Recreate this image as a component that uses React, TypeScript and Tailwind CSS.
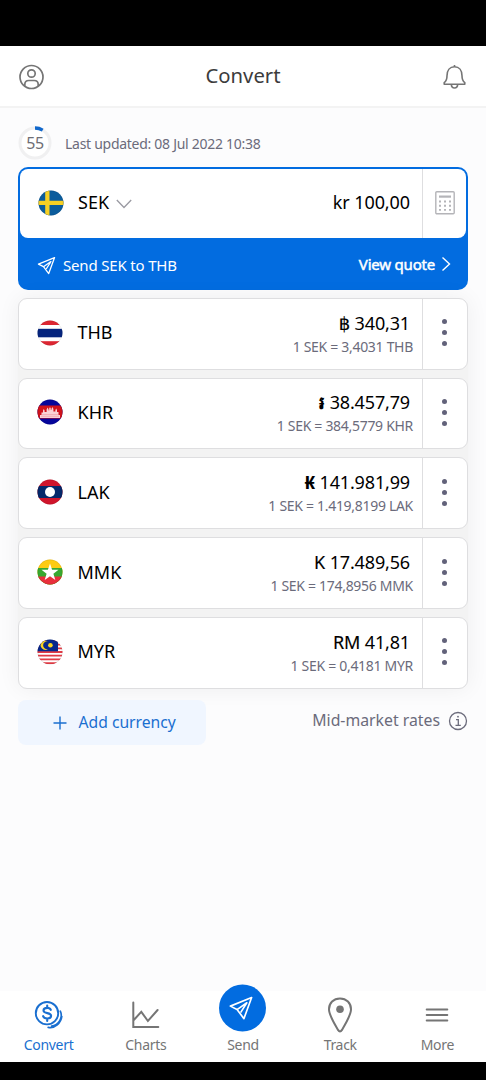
import type { ReactNode } from 'react'

interface Currency {
  code: string
  symbol: string
  boldSymbol?: boolean
  amount: string
  rate: string
  flag: ReactNode
}

function Flag({ id, children }: { id: string; children: ReactNode }) {
  return (
    <svg viewBox="0 0 26 26" className="size-[26px] shrink-0">
      <clipPath id={`flag-${id}`}>
        <circle cx="13" cy="13" r="12.5" />
      </clipPath>
      <g clipPath={`url(#flag-${id})`}>{children}</g>
      <circle cx="13" cy="13" r="12.3" fill="none" stroke="#000" strokeOpacity="0.15" strokeWidth="0.5" />
    </svg>
  )
}

const SEK_FLAG = (
  <Flag id="sek">
    <rect width="26" height="26" fill="#0b5c9c" />
    <path d="M7.2 0h4.3v26H7.2zM0 10.8h26v4.2H0z" fill="#f7d024" />
  </Flag>
)

const CURRENCIES: Currency[] = [
  {
    code: 'THB',
    symbol: '฿',
    amount: '340,31',
    rate: '1 SEK = 3,4031 THB',
    flag: (
      <Flag id="thb">
        <rect width="26" height="26" fill="#fff" />
        <rect width="26" height="5" fill="#dc2631" />
        <rect y="8.8" width="26" height="8.5" fill="#05247d" />
        <rect y="21.2" width="26" height="5" fill="#dc2631" />
      </Flag>
    ),
  },
  {
    code: 'KHR',
    symbol: '៛',
    boldSymbol: true,
    amount: '38.457,79',
    rate: '1 SEK = 384,5779 KHR',
    flag: (
      <Flag id="khr">
        <rect width="26" height="26" fill="#06069b" />
        <rect y="6.5" width="26" height="13" fill="#d1121b" />
        <path
          d="M3 19v-3h1.500v-2.500h1.500v-2l.8-1.500.8 1.500v1.500h2v-2.500l1-2 1 2v1h.6V9.500l.8-1.500.8 1.500V11h.6v-1l1-2 1 2v2.500h2v-1.500l.8-1.500.8 1.500v2h1.500V16H23v3z"
          fill="#fbd3d6"
        />
        <path d="M4 17.300h18M5 15.500h16" stroke="#ec8e96" strokeWidth="0.5" />
      </Flag>
    ),
  },
  {
    code: 'LAK',
    symbol: '₭',
    boldSymbol: true,
    amount: '141.981,99',
    rate: '1 SEK = 1.419,8199 LAK',
    flag: (
      <Flag id="lak">
        <rect width="26" height="26" fill="#cf142b" />
        <rect y="7" width="26" height="12" fill="#04286a" />
        <circle cx="13" cy="13" r="5" fill="#fff" />
      </Flag>
    ),
  },
  {
    code: 'MMK',
    symbol: 'K',
    amount: '17.489,56',
    rate: '1 SEK = 174,8956 MMK',
    flag: (
      <Flag id="mmk">
        <rect width="26" height="26" fill="#fdcb12" />
        <rect y="9" width="26" height="17" fill="#38a830" />
        <rect y="17.5" width="26" height="9" fill="#e92f3c" />
        <path
          d="M13 4.6l2.1 6.1 6.4.1-5.1 3.9 1.9 6.2-5.3-3.7-5.3 3.7 1.9-6.2-5.1-3.9 6.4-.1z"
          fill="#fff"
        />
      </Flag>
    ),
  },
  {
    code: 'MYR',
    symbol: 'RM',
    amount: '41,81',
    rate: '1 SEK = 0,4181 MYR',
    flag: (
      <Flag id="myr">
        <rect width="26" height="26" fill="#fff" />
        <path
          d="M0 1.9h26M0 5.6h26M0 9.3h26M0 13h26M0 16.7h26M0 20.4h26M0 24.1h26"
          stroke="#e23b45"
          strokeWidth="1.8"
        />
        <rect width="21" height="12.3" fill="#06288c" />
        <path d="M10.9 2.4a4.600 4.600 0 1 0 0 7.600 3.900 3.900 0 1 1 0-7.600z" fill="#f8d422" />
        <circle cx="13.400" cy="6.200" r="2.300" fill="#f8d422" />
      </Flag>
    ),
  },
]

function PlaneIcon({ className }: { className: string }) {
  return (
    <svg viewBox="0 0 24 24" fill="none" stroke="currentColor" strokeLinejoin="round" className={className}>
      <path d="M22.2 2L1.8 10.2l6.400 3.300 6.600 8.700z" />
      <path d="M8.200 13.500L17.600 7l-6 9.400" />
    </svg>
  )
}

function CurrencyRow({ currency }: { currency: Currency }) {
  return (
    <div className="flex h-[71.8px] rounded-[9px] border border-[#dedee0] bg-white">
      <div className="flex flex-1 items-center pl-[18.5px]">
        <div className="-ml-[0.5px] pb-[2px]">{currency.flag}</div>
        <span className="ml-[14.500px] pb-[2px] text-[18px] text-black">{currency.code}</span>
        <div className="ml-auto flex flex-col items-end pr-[9px] pt-px">
          <p className="pr-[3px] text-[18px] leading-[25px] tracking-[-0.15px] text-black">
            <span className={currency.boldSymbol ? 'font-bold' : '[-webkit-text-stroke:0.15px_black]'}>
              {currency.symbol}
            </span>{' '}
            {currency.amount}
          </p>
          <p className="text-[14px] leading-[22px] tracking-[-0.3px] text-[#6b6b7b]">{currency.rate}</p>
        </div>
      </div>
      <button className="flex w-[45px] flex-col items-center justify-center gap-[6px] border-l border-[#dedee0] pr-[1.500px] pb-[2px]">
        <span className="size-[5px] rounded-full bg-[#62627a]" />
        <span className="size-[5px] rounded-full bg-[#62627a]" />
        <span className="size-[5px] rounded-full bg-[#62627a]" />
      </button>
    </div>
  )
}

const NAV_ITEMS = [
  {
    label: 'Convert',
    active: true,
    icon: (
      <svg viewBox="0 0 30 30" fill="none" stroke="currentColor" className="size-[30px]">
        <circle cx="13" cy="13.2" r="11.2" strokeWidth="1.9" />
        <path
          d="M16.8 9.8c-.5-1.2-1.800-1.900-3.600-1.900-2.200 0-3.700 1-3.700 2.600 0 3.800 7.600 1.500 7.600 5.300 0 1.700-1.600 2.700-3.900 2.700-2 0-3.600-.8-4.100-2.300M13.200 5.500v2.400M13.200 18.500v2.400"
          strokeWidth="2.100"
          strokeLinecap="round"
        />
        <path d="M26.300 11.200c2.900 6-1.400 14.200-8.700 15M27.800 16.500C27 23 21 28.800 14.200 27.300" strokeWidth="1.700" strokeLinecap="round" />
      </svg>
    ),
  },
  {
    label: 'Charts',
    icon: (
      <svg viewBox="0 0 30 30" fill="none" stroke="currentColor" strokeWidth="2" strokeLinecap="round" className="size-[30px]">
        <path d="M2.300 2.500v24.600h25M2.800 20l7.500-8.200 6.600 9.200L26.600 10" />
      </svg>
    ),
  },
  {
    label: 'Send',
    icon: (
      <span className="flex size-[47px] shrink-0 items-center justify-center rounded-full bg-[#026ce0] text-white">
        <PlaneIcon className="size-[25px] -translate-x-[1.500px] stroke-[1.6]" />
      </span>
    ),
  },
  {
    label: 'Track',
    icon: (
      <svg viewBox="0 0 26 36" fill="none" stroke="currentColor" className="h-[36px] w-[26px]">
        <path
          d="M13 1.400C6.500 1.400 2 6.200 2 12.300c0 5.800 5.500 14.600 9 20.600q2 3 4 0c3.500-6 9-14.800 9-20.600C24 6.200 19.500 1.400 13 1.400z"
          strokeWidth="2"
        />
        <circle cx="13" cy="12.300" r="3.800" fill="currentColor" stroke="none" />
      </svg>
    ),
  },
  {
    label: 'More',
    icon: (
      <svg viewBox="0 0 24 16" fill="none" stroke="currentColor" strokeWidth="2" strokeLinecap="round" className="h-[16px] w-[24px]">
        <path d="M1.700 2.500h20.600M1.700 8h20.600M1.700 13.500h20.600" />
      </svg>
    ),
  },
]

export default function App() {
  return (
    <div className="flex h-[1080px] w-[486px] flex-col overflow-hidden bg-[#fcfcfd] font-['Noto_Sans','DejaVu_Sans',sans-serif]">
      <div className="h-[46px] shrink-0 bg-black" />

      <header className="flex h-[62px] shrink-0 items-center justify-between border-b-2 border-[#f3f3f3] bg-white px-[18px] text-[#757575]">
        <svg viewBox="0 0 26 26" fill="none" stroke="currentColor" strokeWidth="1.700" className="mt-[2px] size-[26px]">
          <circle cx="13.500" cy="13" r="11.500" />
          <circle cx="13.500" cy="9.500" r="3.700" />
          <path d="M6.800 22.200v-1.700c0-2.400 1.600-4 4-4h5.400c2.400 0 4 1.600 4 4v1.700" />
        </svg>
        <h1 className="pb-px text-[20.3px] text-[#3c3c3c]">Convert</h1>
        <svg viewBox="0 0 26 26" fill="none" stroke="currentColor" strokeWidth="1.600" strokeLinejoin="round" className="mt-px size-[26px]">
          <path d="M12.500 1v1.700M2.200 20.200v-1.600c2.400-1.600 2.800-3.400 2.800-6.800 0-5.400 2.800-9.100 7.500-9.100s7.500 3.700 7.500 9.100c0 3.400.4 5.200 2.800 6.800v1.600z" />
          <path d="M9.300 20.400c.2 2.400 1.400 3.600 3.200 3.600s3-1.200 3.200-3.600" />
        </svg>
      </header>

      <main className="flex flex-1 flex-col px-[18px] pt-[18px]">
        {/* Refresh countdown */}
        <div className="flex h-[34px] items-center">
          <div className="relative flex size-[34px] items-center justify-center">
            <svg viewBox="0 0 34 34" fill="none" className="absolute inset-0">
              <circle cx="17" cy="17" r="15" fill="#fff" stroke="#f0f0f1" strokeWidth="3" />
              <path d="M17 2a15 15 0 0 1 7.700 2.100" stroke="#1168cc" strokeWidth="3.300" />
            </svg>
            <span className="relative text-[16px] tracking-[-0.5px] text-[#6e6e75]">55</span>
          </div>
          <span className="ml-[13px] text-[14px] tracking-[-0.28px] text-[#6b6b7b]">Last updated: 08 Jul 2022 10:38</span>
        </div>

        {/* Base currency */}
        <section className="mt-[7px] h-[123.3px] shrink-0 rounded-[10px] bg-[#026ce0] p-[2px]">
          <div className="flex h-[69px] rounded-[8px] bg-white">
            <div className="flex flex-1 items-center pb-[2px] pl-[17.500px]">
              {SEK_FLAG}
              <span className="ml-[14.500px] pb-px text-[18px] text-black">SEK</span>
              <svg viewBox="0 0 16 10" fill="none" stroke="#9a9aa2" strokeWidth="1.300" className="mt-[2px] ml-[7px] h-[10px] w-[16px]">
                <path d="M.8 1L8 8.500 15.200 1" />
              </svg>
              <span className="ml-auto pr-[12px] pb-px text-[18px] tracking-[-0.1px] text-black">kr 100,00</span>
            </div>
            <button className="flex w-[44px] items-center justify-center border-l border-[#dedee0] pb-[2px]">
              <svg viewBox="0 0 20 24" fill="none" stroke="#b4b4b8" className="h-[24px] w-[20px]">
                <rect x=".8" y=".8" width="18.400" height="22" rx="1" strokeWidth="1.400" />
                <path d="M4 5.600h12" strokeWidth="2.200" />
                <path d="M4 10.500h12M4 14.700h12M4 18.900h12" strokeWidth="1.900" strokeDasharray="2 3" />
              </svg>
            </button>
          </div>
          <div className="flex h-[51px] items-center pr-[15px] pl-[17px] text-[15px] tracking-[-0.17px] text-white">
            <PlaneIcon className="mt-[3px] size-[19px] stroke-[1.6]" />
            <span className="ml-[7px] pt-[3px]">Send SEK to THB</span>
            <span className="ml-auto pt-[2px] tracking-[-0.2px] [-webkit-text-stroke:0.5px_white]">View quote</span>
            <svg viewBox="0 0 10 16" fill="none" stroke="currentColor" strokeWidth="1.400" className="mt-px ml-[6px] h-[16px] w-[10px]">
              <path d="M1.500 1.500L8.500 8l-7 6.500" />
            </svg>
          </div>
        </section>

        {/* Converted currencies */}
        <section className="mt-[7.500px] flex flex-col gap-[8px] rounded-[9px] bg-[#f3f3f3] shadow-[0_0_22px_rgba(0,0,0,0.06)]">
          {CURRENCIES.map((currency) => (
            <CurrencyRow key={currency.code} currency={currency} />
          ))}
        </section>

        <div className="mt-[11px] flex justify-between">
          <button className="flex h-[45px] w-[188px] items-center rounded-[8px] bg-[#f0f6ff] pt-px pl-[35px] text-[15.7px] text-[#1a6fd0]">
            <svg viewBox="0 0 14 14" stroke="currentColor" strokeWidth="1.400" className="size-[14px]">
              <path d="M7 .5v13M.5 7h13" />
            </svg>
            <span className="ml-[11.500px]">Add currency</span>
          </button>
          <div className="flex h-[42px] items-center text-[15.800px] text-[#6b6b7b]">
            Mid-market rates
            <svg viewBox="0 0 20 20" fill="none" stroke="currentColor" strokeWidth="1.300" className="ml-[8px] size-[20px]">
              <circle cx="10" cy="10" r="8.500" />
              <path d="M8 8.600h2.300v5.600M7.500 14.300h5.300" />
              <circle cx="10" cy="5.700" r=".9" fill="currentColor" stroke="none" />
            </svg>
          </div>
        </div>
      </main>

      <nav className="grid h-[71px] shrink-0 grid-cols-5 bg-white">
        {NAV_ITEMS.map(({ label, icon, active }) => (
          <a
            key={label}
            className={`flex flex-col items-center text-[14px] leading-[20px] tracking-[-0.3px] ${active ? 'text-[#1a6fd0]' : 'text-[#757575]'}`}
          >
            <span className={`flex h-[44px] items-center justify-center ${label === 'Send' ? '-translate-y-[5.500px]' : 'translate-y-[2px]'}`}>
              {icon}
            </span>
            {label}
          </a>
        ))}
      </nav>
      <div className="h-[18px] shrink-0 bg-black" />
    </div>
  )
}
